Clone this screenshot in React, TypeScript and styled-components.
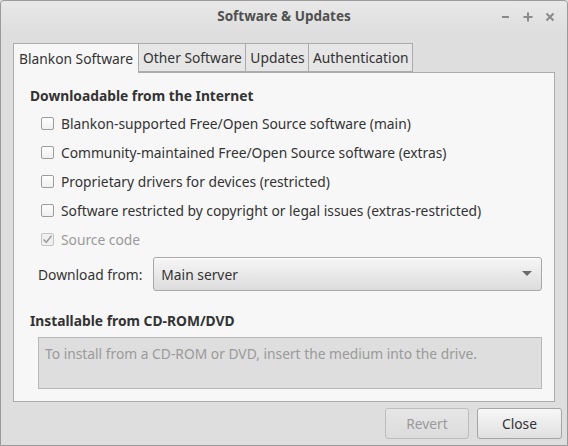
import React from "react";
import styled, { createGlobalStyle } from "styled-components";

const Global = createGlobalStyle`
  html, body { margin: 0; padding: 0; background: #dedede; }
  body { font-family: "Noto Sans", "Open Sans", sans-serif; font-size: 13.8px; color: #333; }
  * { box-sizing: border-box; }
`;

const Window = styled.div`
  width: 568px;
  height: 446px;
  border: 1px solid #9a9a9a;
  border-radius: 4px 4px 0 0;
  background: #dedede;
  display: flex;
  flex-direction: column;
`;

const TitleBar = styled.div`
  height: 31px;
  padding-bottom: 2px;
  position: relative;
  display: flex;
  align-items: center;
  justify-content: center;
  background: linear-gradient(#e8e8e8, #dedede);
  border-radius: 4px 4px 0 0;
`;

const Title = styled.div`
  font-weight: bold;
  font-size: 13.5px;
  color: #505050;
`;

const WinButtons = styled.div`
  position: absolute;
  right: 12px;
  top: 8px;
  display: flex;
  gap: 12px;
  align-items: center;
`;

const WinBtn = styled.svg`
  width: 10px;
  height: 14px;
`;

const Body = styled.div`
  flex: 1;
  display: flex;
  flex-direction: column;
  padding: 11px 12px 0 12px;
`;

const Tabs = styled.div`
  display: flex;
  height: 30px;
  position: relative;
  z-index: 1;
`;

const Tab = styled.div<{ $active?: boolean }>`
  height: ${(p) => (p.$active ? "30px" : "29px")};
  padding: ${(p) => (p.$active ? "0 5px" : "0 3.5px 0 4px")};
  display: flex;
  align-items: center;
  border: 1px solid #ababab;
  border-bottom: ${(p) => (p.$active ? "none" : "1px solid #ababab")};
  border-left: ${(p) => (p.$active ? "1px solid #ababab" : "none")};
  background: ${(p) => (p.$active ? "#f7f7f7" : "#e6e6e6")};
  color: #333;
  white-space: nowrap;
`;

const Panel = styled.div`
  height: 330px;
  margin-top: -1px;
  border: 1px solid #ababab;
  background: #f7f7f7;
  display: flex;
  flex-direction: column;
  padding: 13px 12px 0 16px;
`;

const Heading = styled.div`
  font-weight: bold;
  height: 20px;
  line-height: 20px;
  color: #333;
`;

const CheckList = styled.div`
  display: flex;
  flex-direction: column;
  margin-top: 3px;
  padding-left: 11px;
`;

const CheckRow = styled.label<{ $disabled?: boolean }>`
  height: 29px;
  display: flex;
  align-items: center;
  gap: 7px;
  color: ${(p) => (p.$disabled ? "#9a9a9a" : "#333")};
`;

const Box = styled.span<{ $disabled?: boolean }>`
  width: 13px;
  height: 13px;
  border: 1px solid ${(p) => (p.$disabled ? "#c4c4c4" : "#9c9c9c")};
  border-radius: 2px;
  background: ${(p) => (p.$disabled ? "#f0f0f0" : "linear-gradient(#fdfdfd, #f0f0f0)")};
  display: flex;
  align-items: center;
  justify-content: center;
  flex: none;
`;

const DownloadRow = styled.div`
  display: flex;
  align-items: center;
  margin-top: 3px;
  padding-left: 8px;
  gap: 11px;
`;

const Combo = styled.div`
  flex: 1;
  height: 34px;
  border: 1px solid #a8a8a8;
  border-radius: 3px;
  background: linear-gradient(#f6f6f6, #dcdcdc);
  display: flex;
  align-items: center;
  justify-content: space-between;
  padding: 0 9px 0 7px;
  box-shadow: inset 0 1px 0 #fff;
`;

const Heading2 = styled(Heading)`
  margin-top: 20px;
`;

const InfoBox = styled.div`
  margin: 6px 0 0 8px;
  height: 52px;
  border: 1px solid #b8b8b8;
  background: #dedede;
  color: #9a9a9a;
  padding: 6px 6px;
  line-height: 20px;
`;

const ButtonRow = styled.div`
  display: flex;
  justify-content: flex-end;
  gap: 8px;
  margin-top: 6px;
  margin-right: -7px;
`;

const Button = styled.button<{ $disabled?: boolean; $w: number }>`
  width: ${(p) => p.$w}px;
  height: 31px;
  border: 1px solid ${(p) => (p.$disabled ? "#bdbdbd" : "#a5a5a5")};
  border-radius: 3px;
  background: ${(p) => (p.$disabled ? "linear-gradient(#e6e6e6, #dcdcdc)" : "linear-gradient(#f7f7f7, #e0e0e0)")};
  font-family: inherit;
  font-size: 13.8px;
  color: ${(p) => (p.$disabled ? "#9a9a9a" : "#333")};
  padding: 0;
`;

const Check = ({ checked, disabled, label }: { checked?: boolean; disabled?: boolean; label: string }) => (
  <CheckRow $disabled={disabled}>
    <Box $disabled={disabled}>
      {checked && (
        <svg width="11" height="11" viewBox="0 0 11 11">
          <path d="M1.5 5.5 L4.3 8.3 L9.5 1.8" fill="none" stroke="#a0a0a0" strokeWidth="1.6" />
        </svg>
      )}
    </Box>
    <span>{label}</span>
  </CheckRow>
);

export default function App() {
  return (
    <>
      <Global />
      <Window>
        <TitleBar>
          <Title>Software &amp; Updates</Title>
          <WinButtons>
            <WinBtn viewBox="0 0 10 14">
              <path d="M1 8h7" stroke="#8a8a8a" strokeWidth="2" />
            </WinBtn>
            <WinBtn viewBox="0 0 10 14">
              <path d="M0.5 8h9M5 3.5v9" stroke="#8a8a8a" strokeWidth="2" />
            </WinBtn>
            <WinBtn viewBox="0 0 10 14">
              <path d="M1.5 4.5l7 7M8.5 4.5l-7 7" stroke="#8a8a8a" strokeWidth="2" />
            </WinBtn>
          </WinButtons>
        </TitleBar>
        <Body>
          <Tabs>
            <Tab $active>Blankon Software</Tab>
            <Tab>Other Software</Tab>
            <Tab>Updates</Tab>
            <Tab>Authentication</Tab>
          </Tabs>
          <Panel>
            <Heading>Downloadable from the Internet</Heading>
            <CheckList>
              <Check label="Blankon-supported Free/Open Source software (main)" />
              <Check label="Community-maintained Free/Open Source software (extras)" />
              <Check label="Proprietary drivers for devices (restricted)" />
              <Check label="Software restricted by copyright or legal issues (extras-restricted)" />
              <Check checked disabled label="Source code" />
            </CheckList>
            <DownloadRow>
              <span>Download from:</span>
              <Combo>
                <span>Main server</span>
                <svg width="10" height="6" viewBox="0 0 10 6">
                  <path d="M0 0h10L5 5z" fill="#6a6a6a" />
                </svg>
              </Combo>
            </DownloadRow>
            <Heading2>Installable from CD-ROM/DVD</Heading2>
            <InfoBox>To install from a CD-ROM or DVD, insert the medium into the drive.</InfoBox>
          </Panel>
          <ButtonRow>
            <Button $disabled $w={84}>Revert</Button>
            <Button $w={85}>Close</Button>
          </ButtonRow>
        </Body>
      </Window>
    </>
  );
}
